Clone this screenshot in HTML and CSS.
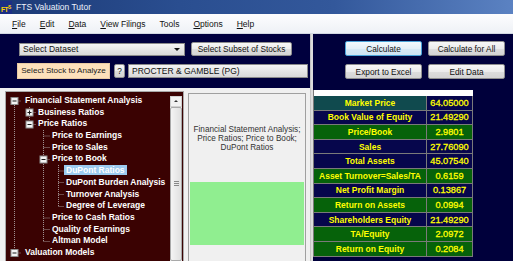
FILE: index.html
```html
<!DOCTYPE html>
<html lang="en">

<head>
    <meta charset="UTF-8">
    <title>FTS Valuation Tutor</title>
    <link rel="stylesheet" href="styles.css">
</head>

<body>
    <div class="titlebar">
        <span class="app-icon">FT<sup>S</sup></span>
        <span class="title">FTS Valuation Tutor</span>
    </div>
    <div class="menubar">
        <span><u>F</u>ile</span>
        <span><u>E</u>dit</span>
        <span><u>D</u>ata</span>
        <span><u>V</u>iew Filings</span>
        <span>Tools</span>
        <span><u>O</u>ptions</span>
        <span><u>H</u>elp</span>
    </div>

    <div class="main">
        <div class="left">
            <div class="toolbar">
                <div class="tool-row">
                    <div class="combo dataset">Select Dataset<span class="arrow"></span></div>
                    <button class="btn subset">Select Subset of Stocks</button>
                </div>
                <div class="tool-row">
                    <div class="stock-label">Select Stock to Analyze</div>
                    <button class="btn help">?</button>
                    <div class="combo stock">PROCTER &amp; GAMBLE (PG)</div>
                </div>
            </div>

            <div class="workarea">
                <div class="tree">
                    <div class="tree-items">
                        <svg class="tree-lines" width="165" height="175">
                            <g stroke="#a09090" stroke-dasharray="1 1" fill="none">
                                <line x1="8.5" y1="9" x2="8.5" y2="161" />
                                <line x1="8.5" y1="9" x2="15" y2="9" />
                                <line x1="8.5" y1="161" x2="15" y2="161" />
                                <line x1="23.5" y1="15" x2="23.5" y2="32.5" />
                                <line x1="23.5" y1="20.5" x2="30" y2="20.5" />
                                <line x1="23.5" y1="32.5" x2="30" y2="32.5" />
                                <line x1="37.5" y1="38" x2="37.5" y2="149.5" />
                                <line x1="37.5" y1="44" x2="44" y2="44" />
                                <line x1="37.5" y1="55.5" x2="44" y2="55.5" />
                                <line x1="37.5" y1="67.5" x2="44" y2="67.5" />
                                <line x1="37.5" y1="126" x2="44" y2="126" />
                                <line x1="37.5" y1="137.5" x2="44" y2="137.5" />
                                <line x1="37.5" y1="149.5" x2="44" y2="149.5" />
                                <line x1="52.5" y1="73" x2="52.5" y2="114.5" />
                                <line x1="52.5" y1="79" x2="58" y2="79" />
                                <line x1="52.5" y1="90.5" x2="58" y2="90.5" />
                                <line x1="52.5" y1="102.5" x2="58" y2="102.5" />
                                <line x1="52.5" y1="114.5" x2="58" y2="114.5" />
                            </g>
                            <g fill="#f2f2f2" stroke="#8c8c8c">
                                <rect x="5" y="5.5" width="7" height="7" />
                                <rect x="20" y="17" width="7" height="7" />
                                <rect x="20" y="29" width="7" height="7" />
                                <rect x="34" y="64" width="7" height="7" />
                                <rect x="5" y="157.5" width="7" height="7" />
                            </g>
                            <g stroke="#1a1a1a">
                                <line x1="6.5" y1="9" x2="10.5" y2="9" />
                                <line x1="21.5" y1="20.5" x2="25.5" y2="20.5" />
                                <line x1="23.5" y1="18.5" x2="23.5" y2="22.5" />
                                <line x1="21.5" y1="32.5" x2="25.5" y2="32.5" />
                                <line x1="35.5" y1="67.5" x2="39.5" y2="67.5" />
                                <line x1="6.5" y1="161" x2="10.5" y2="161" />
                            </g>
                        </svg>
                        <div class="node level-0">Financial Statement Analysis</div>
                        <div class="node level-1">Business Ratios</div>
                        <div class="node level-1">Price Ratios</div>
                        <div class="node level-2">Price to Earnings</div>
                        <div class="node level-2">Price to Sales</div>
                        <div class="node level-2">Price to Book</div>
                        <div class="node level-3"><span class="selected">DuPont Ratios</span></div>
                        <div class="node level-3">DuPont Burden Analysis</div>
                        <div class="node level-3">Turnover Analysis</div>
                        <div class="node level-3">Degree of Leverage</div>
                        <div class="node level-2">Price to Cash Ratios</div>
                        <div class="node level-2">Quality of Earnings</div>
                        <div class="node level-2">Altman Model</div>
                        <div class="node level-0">Valuation Models</div>
                    </div>
                    <div class="vscroll">
                        <div class="scroll-up"></div>
                        <div class="scroll-thumb"><span class="grip"></span></div>
                    </div>
                </div>

                <div class="info">
                    <div class="info-text">Financial Statement Analysis; Price Ratios; Price to Book; DuPont Ratios</div>
                    <div class="info-green"></div>
                </div>
            </div>
        </div>

        <div class="splitter"></div>

        <div class="right">
            <div class="actions">
                <button class="btn focused">Calculate</button>
                <button class="btn">Calculate for All</button>
                <button class="btn">Export to Excel</button>
                <button class="btn">Edit Data</button>
            </div>

            <div class="results">
                <div class="results-head"></div>
                <div class="cell teal">Market Price</div><div class="cell num navy">64.05000</div>
                <div class="cell navy">Book Value of Equity</div><div class="cell num navy">21.49290</div>
                <div class="cell green">Price/Book</div><div class="cell num green">2.9801</div>
                <div class="cell navy">Sales</div><div class="cell num navy">27.76090</div>
                <div class="cell navy">Total Assets</div><div class="cell num navy">45.07540</div>
                <div class="cell green">Asset Turnover=Sales/TA</div><div class="cell num green">0.6159</div>
                <div class="cell navy">Net Profit Margin</div><div class="cell num navy">0.13867</div>
                <div class="cell green">Return on Assets</div><div class="cell num green">0.0994</div>
                <div class="cell navy">Shareholders Equity</div><div class="cell num navy">21.49290</div>
                <div class="cell green">TA/Equity</div><div class="cell num green">2.0972</div>
                <div class="cell green">Return on Equity</div><div class="cell num green">0.2084</div>
            </div>
        </div>
    </div>
</body>

</html>
```

FILE: styles.css
```css
* {
    box-sizing: border-box;
}

body {
    margin: 0;
    width: 513px;
    height: 261px;
    overflow: hidden;
    font-family: "Liberation Sans", Arial, sans-serif;
    font-size: 8.5px;
    background-color: #f0f0f0;
}

.titlebar {
    height: 14px;
    display: flex;
    align-items: center;
    background: linear-gradient(90deg, #1c3a76 0%, #2a4e90 35%, #33589b 65%, #5b82c2 100%);
    color: #eef3fb;
}

.app-icon {
    width: 12px;
    height: 13px;
    background-color: #1b2f86;
    color: #ffd400;
    font-weight: bold;
    font-size: 6.5px;
    line-height: 13px;
    text-align: center;
    letter-spacing: -0.5px;
}

.app-icon sup {
    font-size: 5px;
    vertical-align: 3px;
}

.title {
    margin-left: 4px;
}

.menubar {
    height: 20px;
    display: flex;
    align-items: center;
    gap: 14px;
    padding-left: 12px;
    background: linear-gradient(#fdfdfe, #eef1f6);
    border-bottom: 1px solid #d2d8e2;
    color: #111;
}

.main {
    display: flex;
    height: 227px;
}

.left {
    width: 310px;
    display: flex;
    flex-direction: column;
}

.toolbar {
    height: 54px;
    background-color: #00003e;
    padding-top: 8px;
}

.tool-row {
    display: flex;
    align-items: center;
}

.tool-row + .tool-row {
    margin-top: 7px;
}

.combo {
    height: 13px;
    line-height: 11px;
    padding-left: 3px;
    border: 1px solid #8a8a8a;
    background: linear-gradient(#f4f4f4, #e6e6e6 50%, #d9d9d9);
    color: #111;
    position: relative;
}

.dataset {
    width: 166px;
    margin-left: 19px;
}

.arrow {
    position: absolute;
    right: 4px;
    top: 4px;
    border-left: 3px solid transparent;
    border-right: 3px solid transparent;
    border-top: 3px solid #111;
}

.stock {
    width: 180px;
    height: 14px;
    line-height: 12px;
}

.btn {
    font-family: "Liberation Sans", Arial, sans-serif;
    font-size: 8.3px;
    color: #111;
    height: 14px;
    padding: 0;
    border: 1px solid #8f8f8f;
    border-radius: 2px;
    background: linear-gradient(#f7f7f7, #ebebeb 50%, #dddddd 51%, #d4d4d4);
}

.subset {
    width: 101px;
    margin-left: 6px;
}

.stock-label {
    width: 93px;
    height: 16px;
    line-height: 14px;
    margin-left: 17px;
    text-align: center;
    background-color: #fde0bb;
    border: 1px solid #e8caa4;
    color: #222;
    font-size: 8.1px;
}

.help {
    width: 11px;
    height: 14px;
    margin: 0 3px 0 4px;
}

.workarea {
    flex: 1;
    display: flex;
    gap: 4px;
    padding: 3px 0 0 5px;
    overflow: hidden;
}

.tree {
    width: 179px;
    display: flex;
    background-color: #3a0202;
    border: 1px solid #a8a8a8;
    border-bottom: none;
}

.tree-items {
    flex: 1;
    position: relative;
    padding-top: 3px;
}

.tree-lines {
    position: absolute;
    left: 0;
    top: 0;
}

.node {
    position: relative;
    height: 11.7px;
    line-height: 11.7px;
    color: #fff;
    font-weight: bold;
    white-space: nowrap;
}

.level-0 {
    padding-left: 19px;
}

.level-1 {
    padding-left: 32px;
}

.level-2 {
    padding-left: 46px;
}

.level-3 {
    padding-left: 60px;
}

.selected {
    background-color: #9ccbf0;
    margin-left: -2px;
    padding: 0 2px;
    display: inline-block;
    line-height: 10px;
}

.vscroll {
    width: 12px;
    margin: 4px 1px 0 0;
    display: flex;
    flex-direction: column;
    background-color: #e9e9e9;
}

.scroll-up {
    height: 11px;
    border: 1px solid #d0d0d0;
    background: #f2f2f2;
    position: relative;
}

.scroll-up::after {
    content: "";
    position: absolute;
    left: 3px;
    top: 3px;
    border-left: 2px solid transparent;
    border-right: 2px solid transparent;
    border-bottom: 2px solid #333;
}

.scroll-thumb {
    height: 160px;
    border: 1px solid #a9a9a9;
    border-radius: 2px;
    background: linear-gradient(90deg, #f4f4f4, #e0e0e0);
    display: flex;
    align-items: center;
    justify-content: center;
}

.grip {
    width: 5px;
    height: 5px;
    border-top: 1px solid #888;
    border-bottom: 1px solid #888;
    position: relative;
}

.grip::after {
    content: "";
    position: absolute;
    left: 0;
    right: 0;
    top: 1px;
    border-top: 1px solid #888;
}

.info {
    width: 118px;
    margin-top: 2px;
    border: 1px solid #a0a0a0;
    border-bottom: none;
    padding: 1px 1px 0;
    display: flex;
    flex-direction: column;
}

.info-text {
    height: 87px;
    display: flex;
    align-items: center;
    justify-content: center;
    text-align: center;
    font-size: 8.2px;
    line-height: 9.3px;
    color: #333;
    padding: 0 1px;
}

.info-green {
    height: 63px;
    background-color: #90ee90;
}

.splitter {
    width: 3px;
    background-color: #dcdcdc;
    border-left: 1px solid #c4c4c4;
}

.right {
    flex: 1;
    background-color: #00003b;
}

.actions {
    display: grid;
    grid-template-columns: 77px 77px;
    column-gap: 6px;
    row-gap: 8px;
    padding: 7px 0 0 32px;
}

.actions .btn {
    height: 15px;
}

.focused {
    border-color: #4aa3d8;
    background: linear-gradient(#f3f9fd, #e4f0f8 50%, #d6e9f5 51%, #cfe4f2);
}

.results {
    margin-top: 11px;
    width: 159px;
    display: grid;
    grid-template-columns: 113px 46px;
    grid-template-rows: 6px;
    grid-auto-rows: 14.6px;
    border-left: 1px solid #7a7a7a;
}

.results-head {
    grid-column: 1 / 3;
    background-color: #fff;
}

.cell {
    display: flex;
    align-items: center;
    justify-content: center;
    color: #ffff00;
    font-weight: bold;
    font-size: 8.5px;
    white-space: nowrap;
    border-right: 1px solid #7a7a7a;
    border-bottom: 1px solid #7a7a7a;
}

.num {
    font-size: 9.2px;
    font-weight: normal;
    -webkit-text-stroke: 0.3px #ffff00;
}

.teal {
    background-color: #104a4e;
}

.navy {
    background-color: #06064c;
}

.green {
    background-color: #06620a;
}
```
